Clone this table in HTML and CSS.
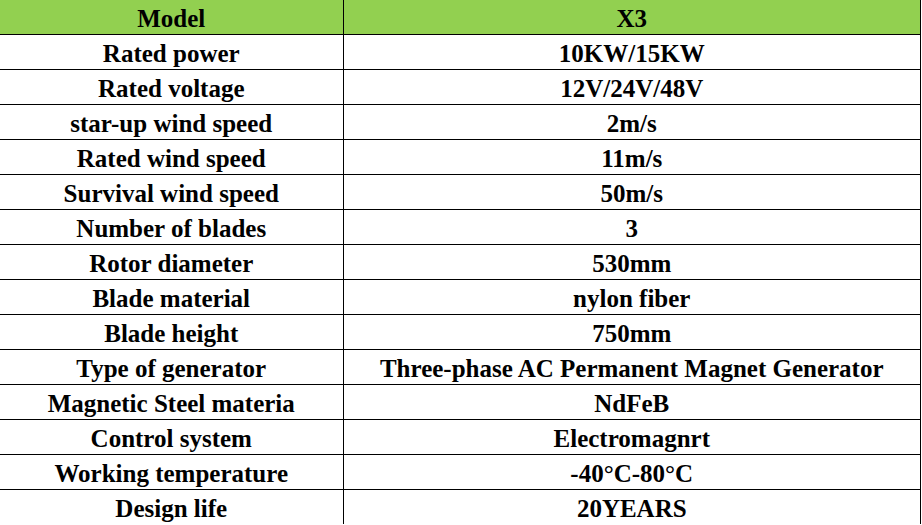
FILE: index.html
```html
<!DOCTYPE html>
<html>
<head>
<meta charset="utf-8">
<link rel="stylesheet" href="styles.css">
</head>
<body>
<table class="spec">
  <tr class="head"><td class="k">Model</td><td class="v">X3</td></tr>
  <tr><td class="k">Rated power</td><td class="v">10KW/15KW</td></tr>
  <tr><td class="k">Rated voltage</td><td class="v">12V/24V/48V</td></tr>
  <tr><td class="k">star-up wind speed</td><td class="v">2m/s</td></tr>
  <tr><td class="k">Rated wind speed</td><td class="v">11m/s</td></tr>
  <tr><td class="k">Survival wind speed</td><td class="v">50m/s</td></tr>
  <tr><td class="k">Number of blades</td><td class="v">3</td></tr>
  <tr><td class="k">Rotor diameter</td><td class="v">530mm</td></tr>
  <tr><td class="k">Blade material</td><td class="v">nylon fiber</td></tr>
  <tr><td class="k">Blade height</td><td class="v">750mm</td></tr>
  <tr><td class="k">Type of generator</td><td class="v">Three-phase AC Permanent Magnet Generator</td></tr>
  <tr><td class="k">Magnetic Steel materia</td><td class="v">NdFeB</td></tr>
  <tr><td class="k">Control system</td><td class="v">Electromagnrt</td></tr>
  <tr><td class="k">Working temperature</td><td class="v">-40°C-80°C</td></tr>
  <tr><td class="k">Design life</td><td class="v">20YEARS</td></tr>
</table>
</body>
</html>
```
FILE: styles.css
```css
html, body {
  margin: 0;
  padding: 0;
  background: #ffffff;
}
.spec {
  border-collapse: collapse;
  width: 921px;
  table-layout: fixed;
  font-family: "Liberation Serif", "Times New Roman", serif;
  font-weight: bold;
  font-size: 25px;
  color: #000;
}
.spec td {
  height: 34px;
  box-sizing: border-box;
  padding: 3px 0 0 0;
  text-align: center;
  vertical-align: middle;
  border-bottom: 1px solid #000;
  border-right: 1px solid #000;
  white-space: nowrap;
  line-height: 31px;
}
.spec td.k {
  width: 343px;
}
.spec tr:last-child td {
  border-bottom: none;
}
.spec .head td {
  background: #92d050;
}
```
